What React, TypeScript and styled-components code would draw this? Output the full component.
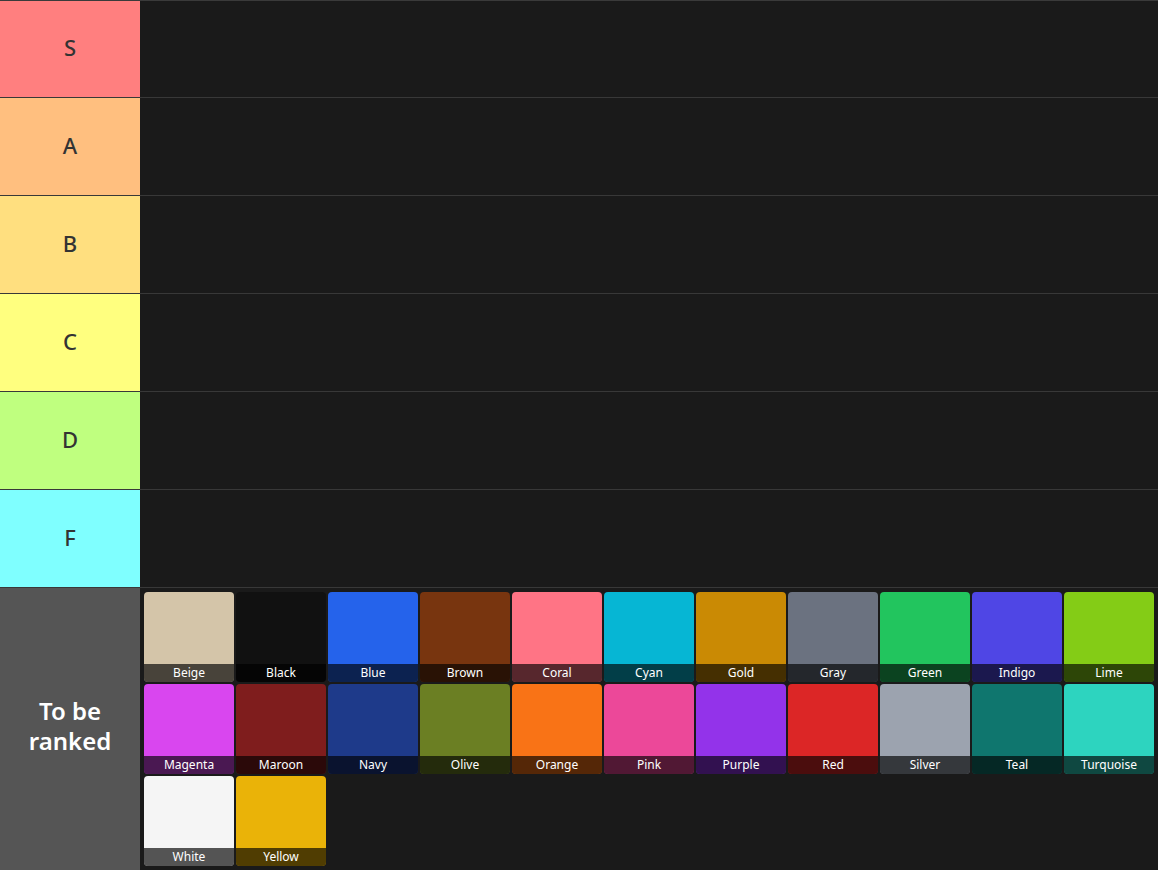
import styled, { createGlobalStyle } from "styled-components";

type Tier = { name: string; color: string };
type Item = { name: string; color: string };

const tiers: Tier[] = [
  { name: "S", color: "#ff7f7f" },
  { name: "A", color: "#ffbf7f" },
  { name: "B", color: "#ffdf7f" },
  { name: "C", color: "#ffff7f" },
  { name: "D", color: "#bfff7f" },
  { name: "F", color: "#7fffff" },
];

const pool: Item[] = [
  { name: "Beige", color: "#d4c5a9" },
  { name: "Black", color: "#111111" },
  { name: "Blue", color: "#2563eb" },
  { name: "Brown", color: "#78350f" },
  { name: "Coral", color: "#ff7485" },
  { name: "Cyan", color: "#06b6d4" },
  { name: "Gold", color: "#ca8a04" },
  { name: "Gray", color: "#6b7280" },
  { name: "Green", color: "#22c55e" },
  { name: "Indigo", color: "#4f46e5" },
  { name: "Lime", color: "#84cc16" },
  { name: "Magenta", color: "#d946ef" },
  { name: "Maroon", color: "#7f1d1d" },
  { name: "Navy", color: "#1e3a8a" },
  { name: "Olive", color: "#6b7f23" },
  { name: "Orange", color: "#f97316" },
  { name: "Pink", color: "#ec4899" },
  { name: "Purple", color: "#9333ea" },
  { name: "Red", color: "#dc2626" },
  { name: "Silver", color: "#9ca3af" },
  { name: "Teal", color: "#0f766e" },
  { name: "Turquoise", color: "#2dd4bf" },
  { name: "White", color: "#f5f5f5" },
  { name: "Yellow", color: "#eab308" },
];

const GlobalStyle = createGlobalStyle`
  html, body {
    margin: 0;
    padding: 0;
    background: #1a1a1a;
    font-family: "Noto Sans", "Open Sans", sans-serif;
  }
`;

export default function App() {
  return (
    <>
      <GlobalStyle />
      <Board>
        {tiers.map((tier) => (
          <Row key={tier.name}>
            <Label $bg={tier.color}>{tier.name}</Label>
            <Drop />
          </Row>
        ))}
        <Row>
          <Label $bg="#555555" $light>
            To be
            <br />
            ranked
          </Label>
          <Drop $padded>
            {pool.map((item) => (
              <Tile key={item.name} $bg={item.color}>
                <Caption>{item.name}</Caption>
              </Tile>
            ))}
          </Drop>
        </Row>
      </Board>
    </>
  );
}

const Board = styled.div`
  width: 1158px;
  display: flex;
  flex-direction: column;
  background: #1a1a1a;
  border-top: 1px solid #3a3a3a;
`;

const Row = styled.div`
  display: flex;
  min-height: 97px;
  border-bottom: 1px solid #383838;

  &:first-child {
    min-height: 96px;
  }
`;

const Label = styled.div<{ $bg: string; $light?: boolean }>`
  width: 140px;
  flex-shrink: 0;
  display: flex;
  align-items: center;
  justify-content: center;
  text-align: center;
  box-sizing: border-box;
  padding-bottom: ${({ $light }) => ($light ? "6px" : "3px")};
  background: ${({ $bg }) => $bg};
  color: ${({ $light }) => ($light ? "#ffffff" : "#333333")};
  font-size: ${({ $light }) => ($light ? "24px" : "22px")};
  font-weight: ${({ $light }) => ($light ? 600 : 500)};
  line-height: ${({ $light }) => ($light ? "30px" : "29px")};
`;

const Drop = styled.div<{ $padded?: boolean }>`
  flex: 1;
  display: flex;
  flex-wrap: wrap;
  align-content: flex-start;
  padding: ${({ $padded }) => ($padded ? "3px" : "0")};
  background: #1a1a1a;
`;

const Tile = styled.div<{ $bg: string }>`
  position: relative;
  width: 90px;
  height: 90px;
  margin: 1px;
  border-radius: 4px;
  overflow: hidden;
  background: ${({ $bg }) => $bg};
`;

const Caption = styled.div`
  position: absolute;
  left: 0;
  right: 0;
  bottom: 0;
  height: 18px;
  line-height: 17px;
  background: rgba(0, 0, 0, 0.66);
  color: #ffffff;
  font-size: 12px;
  text-align: center;
`;
